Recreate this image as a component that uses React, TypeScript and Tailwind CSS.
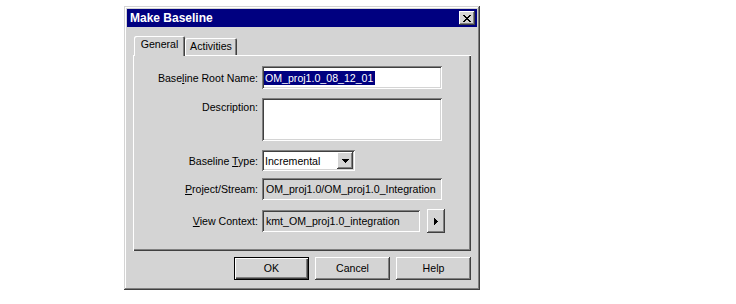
import React from "react";

const raised =
  "shadow-[inset_-1px_-1px_0_#404040,inset_1px_1px_0_#fff,inset_-2px_-2px_0_#808080]";
const sunken =
  "shadow-[inset_1px_1px_0_#808080,inset_-1px_-1px_0_#fff,inset_2px_2px_0_#404040,inset_-2px_-2px_0_#d4d4d4]";

function CloseGlyph() {
  return (
    <svg width="8" height="7" viewBox="0 0 8 7" shapeRendering="crispEdges">
      <path
        d="M0 0h2v1H0zM6 0h2v1H6zM1 1h2v1H1zM5 1h2v1H5zM2 2h4v1H2zM3 3h2v1H3zM2 4h4v1H2zM1 5h2v1H1zM5 5h2v1H5zM0 6h2v1H0zM6 6h2v1H6z"
        fill="#000"
      />
    </svg>
  );
}

function DownGlyph() {
  return (
    <svg width="7" height="4" viewBox="0 0 7 4" shapeRendering="crispEdges">
      <path d="M0 0h7v1H0zM1 1h5v1H1zM2 2h3v1H2zM3 3h1v1H3z" fill="#000" />
    </svg>
  );
}

function RightGlyph() {
  return (
    <svg width="4" height="7" viewBox="0 0 4 7" shapeRendering="crispEdges">
      <path d="M0 0h1v7H0zM1 1h1v5H1zM2 2h1v3H2zM3 3h1v1H3z" fill="#000" />
    </svg>
  );
}

function Label({ children, top }: { children: React.ReactNode; top?: boolean }) {
  return (
    <div
      className={`w-[125px] shrink-0 text-right leading-[12px] ${
        top ? "self-start pt-[3px]" : ""
      }`}
    >
      {children}
    </div>
  );
}

function DialogButton({ text, isDefault }: { text: string; isDefault?: boolean }) {
  return (
    <div
      className={`w-[75px] h-[23px] flex items-center justify-center bg-[#d4d4d4] ${
        isDefault
          ? "shadow-[inset_0_0_0_1px_#000,inset_2px_2px_0_#fff,inset_-2px_-2px_0_#404040,inset_-3px_-3px_0_#808080]"
          : raised
      }`}
    >
      {text}
    </div>
  );
}

export default function App() {
  return (
    <div className="w-[736px] h-[304px] bg-white pl-[124px] pt-[6px] font-['Liberation_Sans',Arial,sans-serif] text-[10.6px] text-black">
      <div className="w-[356px] h-[284px] bg-[#d4d4d4] p-[3px] flex flex-col shadow-[inset_-1px_-1px_0_#404040,inset_1px_1px_0_#d4d4d4,inset_-2px_-2px_0_#808080,inset_2px_2px_0_#fff]">
        {/* title bar */}
        <div className="h-[18px] bg-[#000080] flex items-center justify-between pl-[3px] pr-[2px]">
          <span className="text-white font-bold text-[12px] leading-[14px]">Make Baseline</span>
          <div className={`w-[16px] h-[14px] bg-[#d4d4d4] flex items-center justify-center ${raised}`}>
            <CloseGlyph />
          </div>
        </div>

        <div className="flex-1 px-[6px] pt-[9px] flex flex-col">
          {/* tabs */}
          <div className="h-[19px] flex items-end pl-[1px]">
            <div className="relative z-10 w-[51px] h-[20px] -mb-px bg-[#d4d4d4] rounded-t-[2px] pt-[2px] text-center leading-[12px] shadow-[inset_1px_1px_0_#fff,inset_-1px_0_0_#404040,inset_-2px_0_0_#808080]">
              General
            </div>
            <div className="w-[52px] h-[17px] bg-[#d4d4d4] rounded-t-[2px] pt-[2px] text-center leading-[12px] shadow-[inset_1px_1px_0_#fff,inset_-1px_0_0_#404040,inset_-2px_0_0_#808080]">
              Activities
            </div>
          </div>

          {/* panel */}
          <div className="h-[196px] bg-[#d4d4d4] pt-[11px] flex flex-col shadow-[inset_1px_1px_0_#fff,inset_-1px_-1px_0_#404040,inset_-2px_-2px_0_#808080]">
            <div className="flex items-center h-[23px]">
              <Label>
                Base<u>l</u>ine Root Name:
              </Label>
              <div className={`ml-[4px] w-[180px] h-[23px] bg-white flex items-center pl-[2px] ${sunken}`}>
                <span className="bg-[#000080] text-white leading-[14px] pr-[2px] pl-[1px]">
                  OM_proj1.0_08_12_01
                </span>
              </div>
            </div>

            <div className="flex items-start h-[43px] mt-[9px]">
              <Label top>Description:</Label>
              <div className={`ml-[4px] w-[180px] h-[43px] bg-white ${sunken}`} />
            </div>

            <div className="flex items-center h-[21px] mt-[9px]">
              <Label>
                Baseline <u>T</u>ype:
              </Label>
              <div className={`ml-[4px] w-[93px] h-[21px] bg-white flex items-center justify-between pl-[3px] pr-[2px] ${sunken}`}>
                <span className="leading-[12px]">Incremental</span>
                <div className={`w-[16px] h-[17px] bg-[#d4d4d4] flex items-center justify-center ${raised}`}>
                  <DownGlyph />
                </div>
              </div>
            </div>

            <div className="flex items-center h-[22px] mt-[7px]">
              <Label>
                <u>P</u>roject/Stream:
              </Label>
              <div className={`ml-[4px] w-[180px] h-[22px] bg-[#d4d4d4] flex items-center pl-[4px] leading-[12px] ${sunken}`}>
                OM_proj1.0/OM_proj1.0_Integration
              </div>
            </div>

            <div className="flex items-center h-[22px] mt-[10px]">
              <Label>
                <u>V</u>iew Context:
              </Label>
              <div className={`ml-[4px] w-[158px] h-[22px] bg-[#d4d4d4] flex items-center pl-[4px] leading-[12px] ${sunken}`}>
                kmt_OM_proj1.0_integration
              </div>
              <div className={`ml-[7px] w-[18px] h-[24px] shrink-0 bg-[#d4d4d4] flex items-center justify-center ${raised}`}>
                <RightGlyph />
              </div>
            </div>
          </div>

          {/* buttons */}
          <div className="mt-[6px] flex justify-end gap-[6px]">
            <DialogButton text="OK" isDefault />
            <DialogButton text="Cancel" />
            <DialogButton text="Help" />
          </div>
        </div>
      </div>
    </div>
  );
}
